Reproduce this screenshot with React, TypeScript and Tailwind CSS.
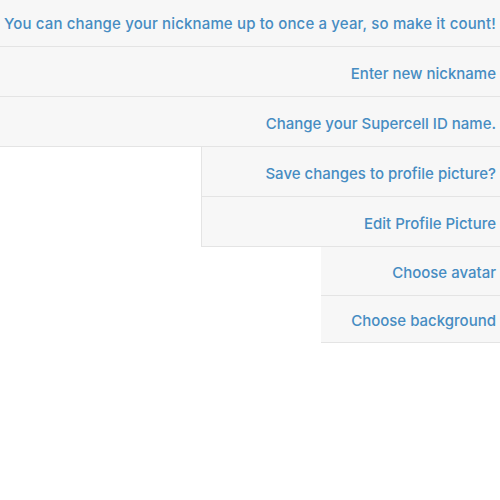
const rows: { text: string; indent: string; h: string }[] = [
  { text: 'Enter new nickname', indent: 'ml-0', h: 'h-[50px]' },
  { text: 'Change your Supercell ID name.', indent: 'ml-0', h: 'h-[50px]' },
  { text: 'Save changes to profile picture?', indent: 'ml-[201px] border-l border-[#d4d4d4]', h: 'h-[50px]' },
  { text: 'Edit Profile Picture', indent: 'ml-[201px] border-l border-[#d4d4d4]', h: 'h-[50px]' },
  { text: 'Choose avatar', indent: 'ml-[321px]', h: 'h-[49px]' },
  { text: 'Choose background', indent: 'ml-[321px]', h: 'h-[47px]' },
];

export default function App() {
  return (
    <div className="w-[500px] h-[500px] bg-white font-['Inter',sans-serif] font-medium text-[#468cc2] text-[15px] overflow-hidden">
      <div className="h-[47px] pt-[2px] bg-[#f7f7f7] border-b border-[#e4e4e4] flex items-center justify-center whitespace-nowrap tracking-[0.15px]">
        You can change your nickname up to once a year, so make it count!
      </div>
      {rows.map((r) => (
        <div
          key={r.text}
          className={`${r.indent} ${r.h} pt-[5px] bg-[#f7f7f7] border-b border-[#e4e4e4] flex items-center justify-end pr-[4px] whitespace-nowrap`}
        >
          {r.text}
        </div>
      ))}
    </div>
  );
}
